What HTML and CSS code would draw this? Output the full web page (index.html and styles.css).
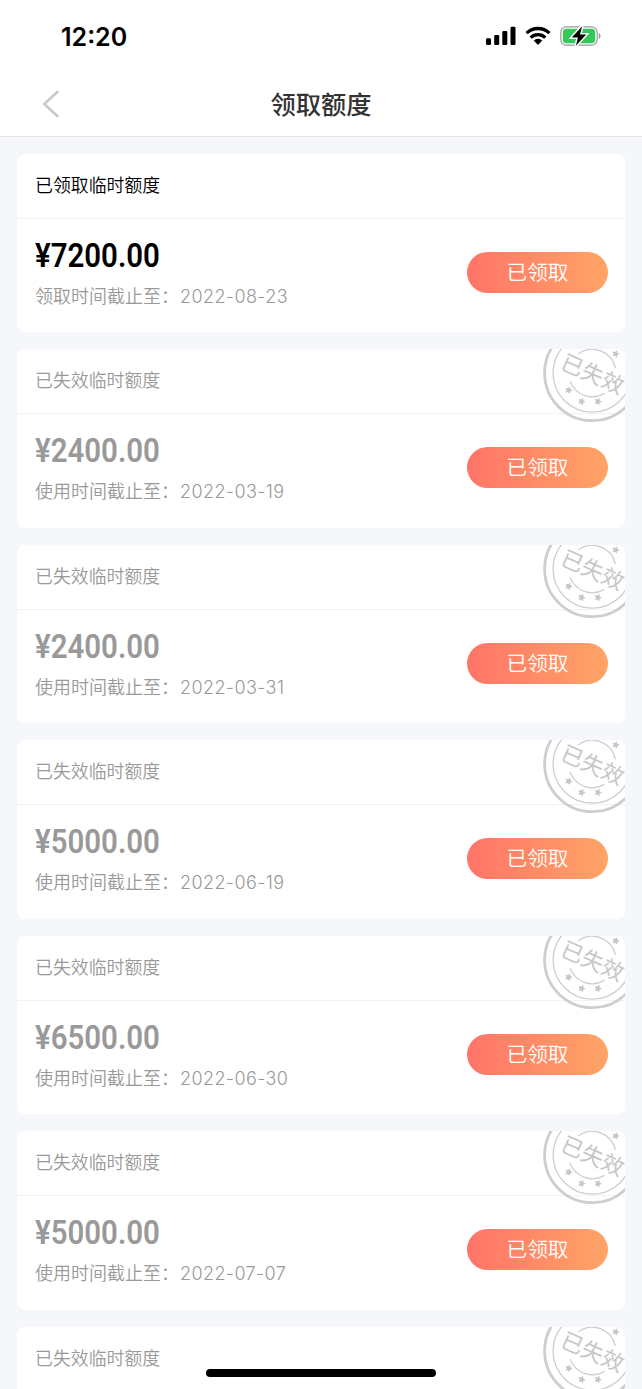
FILE: index.html
```html
<!DOCTYPE html>
<html lang="zh-CN">
<head>
  <meta charset="UTF-8">
  <meta name="viewport" content="width=device-width, initial-scale=1.0">
  <title>领取额度</title>
  <link rel="stylesheet" href="styles.css">
</head>
<body>
  <header class="header">
    <div class="status-bar">
      <span class="clock">12:20</span>
      <div class="status-icons">
        <svg width="30" height="20" viewBox="0 0 30 20">
          <rect x="0" y="12.3" width="5" height="6.7" rx="1.3"/>
          <rect x="8.2" y="9" width="5" height="10" rx="1.3"/>
          <rect x="16.3" y="5" width="5" height="14" rx="1.3"/>
          <rect x="24.5" y="0.8" width="5" height="18.2" rx="1.3"/>
        </svg>
        <svg class="wifi" width="26" height="20" viewBox="0 0 26 20">
          <path d="M1.6 7.2a16.2 16.2 0 0 1 22.8 0M5.7 11.6a10.4 10.4 0 0 1 14.6 0" fill="none" stroke="#000" stroke-width="3.3"/>
          <path d="M8.7 14.5a6.4 6.4 0 0 1 8.6 0L13 19z"/>
        </svg>
        <svg class="battery" width="42" height="22" viewBox="0 0 42 22">
          <rect x="0.8" y="1.8" width="36.4" height="18.4" rx="5.6" fill="#fff" stroke="#999" stroke-width="1.2"/>
          <path d="M38.8 8v6c2.3-.8 2.3-5.2 0-6z" fill="#999"/>
          <rect x="2.8" y="3.8" width="32.4" height="14.4" rx="3.6" fill="#34c759"/>
          <path d="M22.2 1.2L11.8 12.5h6.1L15.9 20.8 26.2 9.5H20z" stroke="#fff" stroke-width="3" paint-order="stroke"/>
        </svg>
      </div>
    </div>
    <div class="nav-bar">
      <svg class="back" width="18" height="28" viewBox="0 0 18 28">
        <path d="M15.5 1.8L2.3 14l13.2 12.2" fill="none" stroke="#c8c8ca" stroke-width="2.6" stroke-linecap="round"/>
      </svg>
      <h1>领取额度</h1>
    </div>
  </header>

  <main id="list" class="list">
    <section class="card active">
      <h2 class="card-title">已领取临时额度</h2>
      <div class="card-body">
        <div>
          <p class="amount">¥7200.00</p>
          <p class="date">领取时间截止至：<span>2022-08-23</span></p>
        </div>
        <button class="button">已领取</button>
      </div>
    </section>
  </main>

  <div class="home-indicator"></div>

  <template id="expired-card">
    <section class="card">
      <h2 class="card-title">已失效临时额度</h2>
      <svg class="stamp" width="82" height="74" viewBox="0 0 82 74">
        <g fill="none" stroke="#cecece">
          <circle cx="49.3" cy="24" r="47.7" stroke-width="2.8"/>
          <circle cx="49.3" cy="24" r="39.2" stroke-width="1.3"/>
          <path d="M35.3 4.9A23.7 23.7 0 0 1 72.4 18.8M27 31.9A23.7 23.7 0 0 0 61.6 44.3" stroke-width="1.3"/>
        </g>
        <g fill="#c6c6c6">
          <path d="M0-4l1.2 2.4 2.7.4-2 1.9.5 2.6L0 2.1l-2.4 1.2.5-2.6-2-1.9 2.7-.4z" transform="translate(72.7 4.9) rotate(20)"/>
          <path d="M0-4l1.2 2.4 2.7.4-2 1.9.5 2.6L0 2.1l-2.4 1.2.5-2.6-2-1.9 2.7-.4z" transform="translate(25.7 41.2) rotate(20)"/>
          <path d="M0-4l1.2 2.4 2.7.4-2 1.9.5 2.6L0 2.1l-2.4 1.2.5-2.6-2-1.9 2.7-.4z" transform="translate(38.7 52.5) rotate(20)"/>
          <path d="M0-4l1.2 2.4 2.7.4-2 1.9.5 2.6L0 2.1l-2.4 1.2.5-2.6-2-1.9 2.7-.4z" transform="translate(55 52.5) rotate(20)"/>
        </g>
        <text class="stamp-text" x="49.6" y="33" text-anchor="middle" transform="rotate(24 49.6 25)">已失效</text>
      </svg>
      <div class="card-body">
        <div>
          <p class="amount"></p>
          <p class="date">使用时间截止至：<span></span></p>
        </div>
        <button class="button">已领取</button>
      </div>
    </section>
  </template>

  <script>
    const expired = [
      ['¥2400.00', '2022-03-19'],
      ['¥2400.00', '2022-03-31'],
      ['¥5000.00', '2022-06-19'],
      ['¥6500.00', '2022-06-30'],
      ['¥5000.00', '2022-07-07']
    ];
    const list = document.getElementById('list');
    const template = document.getElementById('expired-card');

    expired.forEach(([amount, date]) => {
      const card = template.content.cloneNode(true);
      card.querySelector('.amount').textContent = amount;
      card.querySelector('.date span').textContent = date;
      list.appendChild(card);
    });

    const next = template.content.cloneNode(true);
    next.querySelector('.card-body').remove();
    list.appendChild(next);
  </script>
</body>
</html>
```

FILE: styles.css
```css
* {
  box-sizing: border-box;
}
html,
body {
  height: 100%;
  overflow: hidden;
}
body {
  margin: 0;
  background: #f6f7fa;
  font-family: 'Noto Sans CJK SC', sans-serif;
  color: #000;
}
h1,
h2,
p {
  margin: 0;
}
.header {
  height: 137px;
  background: #fff;
  border-bottom: 1px solid #e6e6e8;
}
.status-bar {
  display: flex;
  justify-content: space-between;
  align-items: center;
  height: 73px;
  padding: 0 40px 0 61px;
}
.clock {
  font: 600 25px/30px Inter, sans-serif;
}
.status-icons {
  display: flex;
  align-items: center;
  margin-top: -1px;
}
.wifi {
  margin-left: 9px;
}
.battery {
  margin-left: 9px;
}
.nav-bar {
  position: relative;
  display: flex;
  justify-content: center;
  align-items: center;
  height: 60px;
}
.nav-bar h1 {
  font-size: 25.3px;
  line-height: 36px;
  font-weight: 500;
  color: #333;
}
.back {
  position: absolute;
  left: 42px;
  top: 17px;
}
.list {
  display: flex;
  flex-direction: column;
  gap: 17px;
  padding: 16.5px 17px 0;
}
.card {
  position: relative;
  flex: none;
  height: 178.6px;
  background: #fff;
  border-radius: 8px;
  overflow: hidden;
  color: #999;
}
.card.active {
  color: #000;
}
.card-title {
  height: 65px;
  padding-left: 18px;
  border-bottom: 1px solid #f2f2f3;
  font-size: 17.9px;
  line-height: 61px;
  font-weight: 350;
}
.card-body {
  display: flex;
  justify-content: space-between;
  padding: 16px 17px 0 18px;
}
.amount {
  font: 600 34px/40px Roboto, sans-serif;
  transform: scaleX(0.865);
  transform-origin: left;
}
.date {
  margin-top: 7px;
  font-size: 18px;
  line-height: 26px;
  font-weight: 350;
  color: #999;
}
.date span {
  margin-left: 1px;
  font-family: Inter, sans-serif;
  font-weight: 300;
  letter-spacing: 0.4px;
}
.button {
  width: 141px;
  height: 41px;
  margin-top: 17px;
  padding: 0 0 3px;
  border: none;
  border-radius: 21px;
  background: linear-gradient(90deg, #ff7468, #ffa466);
  color: #fff;
  font: 350 20.7px/38px 'Noto Sans CJK SC', sans-serif;
}
.stamp {
  position: absolute;
  top: 0;
  right: 0;
}
.stamp-text {
  font-size: 22px;
  fill: #c6c6c6;
}
.home-indicator {
  position: fixed;
  left: 206px;
  bottom: 12px;
  width: 230px;
  height: 8px;
  border-radius: 4px;
  background: #000;
}
```
